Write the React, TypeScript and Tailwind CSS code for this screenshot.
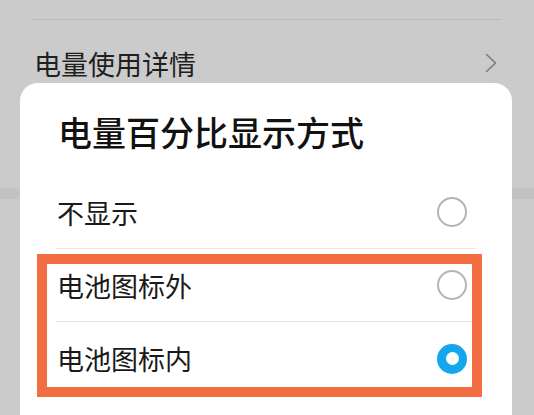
import React from 'react';

const font = { fontFamily: '"Noto Sans CJK SC", "Noto Sans", sans-serif' };

function Radio({ checked }: { checked?: boolean }) {
  if (checked) {
    return (
      <div className="w-[30px] h-[30px] rounded-full bg-[#14a7ee] flex items-center justify-center">
        <div className="w-[13px] h-[13px] rounded-full bg-white" />
      </div>
    );
  }
  return <div className="w-[30px] h-[30px] rounded-full border-2 border-[#b3b3b3] bg-white" />;
}

function Option({ label, checked, last }: { label: string; checked?: boolean; last?: boolean }) {
  return (
    <div className={`h-[73px] flex items-center justify-between ${last ? '' : 'border-b border-[#e6e6e6]'}`}>
      <span className="text-[27px] leading-none text-[#1a1a1a] ml-[1px]">{label}</span>
      <div className="mr-[9px]">
        <Radio checked={checked} />
      </div>
    </div>
  );
}

export default function App() {
  return (
    <div className="relative w-[534px] h-[415px] overflow-hidden bg-[#cbcbcb]" style={font}>
      {/* settings page behind the dialog */}
      <div className="pt-[19px]">
        <div className="mx-[32px] h-px bg-[#bababa]" />
        <div className="h-[90px] flex items-center justify-between pl-[34px] pr-[37px] pb-[4px]">
          <span className="text-[27px] leading-none text-[#1f1f1f]">电量使用详情</span>
          <svg width="12" height="20" viewBox="0 0 12 20" fill="none">
            <path d="M1.5 1.5 L10.5 10 L1.5 18.5" stroke="#7a7a7a" strokeWidth="1.6" strokeLinecap="round" strokeLinejoin="round" />
          </svg>
        </div>
        <div className="h-[78px]" />
        <div className="h-[11px] bg-[#c2c2c2]" />
      </div>

      {/* dialog */}
      <div className="absolute left-[20px] top-[83px] w-[492px] h-[360px] bg-white rounded-t-[18px]">
        <div className="pt-[29px] pl-[38px] h-[93px]">
          <h1 className="text-[34px] leading-[40px] font-medium text-[#111]">电量百分比显示方式</h1>
        </div>
        <div className="mx-[36px]">
          <Option label="不显示" />
          <Option label="电池图标外" />
          <Option label="电池图标内" checked last />
        </div>
      </div>

      {/* highlight annotation */}
      <div className="absolute left-[37px] top-[254px] w-[445px] h-[143px] border-[10px] border-[#f26e42]" />
    </div>
  );
}
